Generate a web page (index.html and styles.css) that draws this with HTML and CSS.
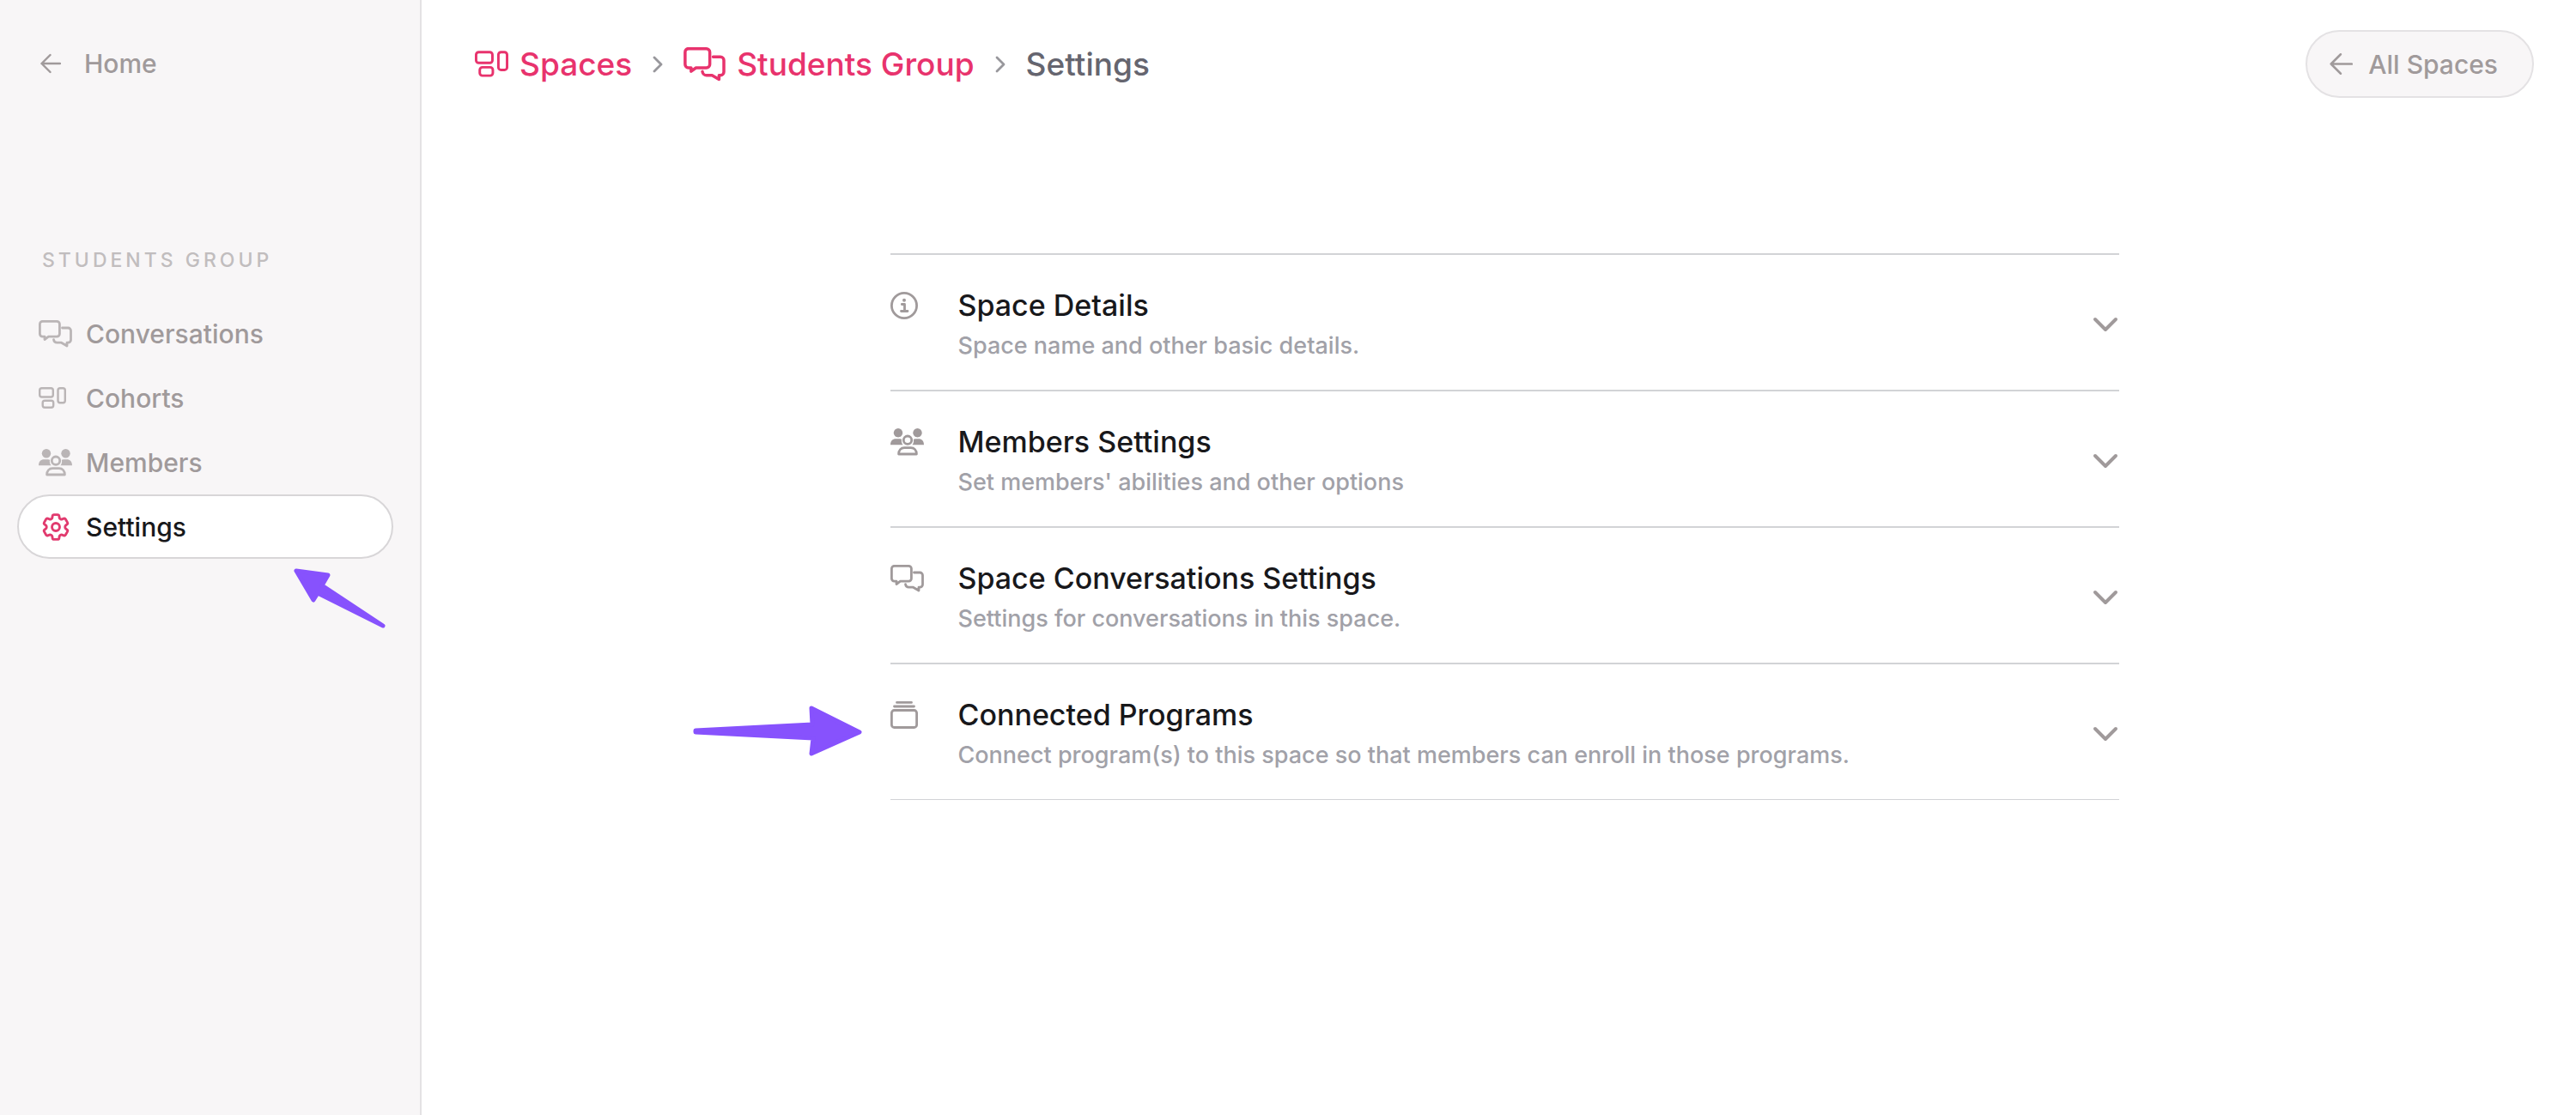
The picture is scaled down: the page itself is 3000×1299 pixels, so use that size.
FILE: index.html
```html
<!DOCTYPE html>
<html lang="en">
<head>
  <meta charset="UTF-8" />
  <meta name="viewport" content="width=device-width, initial-scale=1.0" />
  <title>Settings - Students Group</title>
  <link rel="stylesheet" href="styles.css">
</head>
<body>

  <!-- shared icons -->
  <svg class="sprite" aria-hidden="true">
    <symbol id="icon-back" viewBox="0 0 24 24">
      <path d="M23 12H1.5M11.500 2L1.500 12l10 10" />
    </symbol>
    <symbol id="icon-chat" viewBox="0 0 39 32">
      <path d="M4.500 1.400H21.200a3.200 3.200 0 0 1 3.200 3.200V16a3.200 3.200 0 0 1-3.200 3.200H11.500L7 22.500V19.200H4.500A3.200 3.200 0 0 1 1.400 16V4.500a3.200 3.200 0 0 1 3.200-3.200z" />
      <path d="M27.500 9h6.800a3.200 3.200 0 0 1 3.200 3.200V23a3.200 3.200 0 0 1-3.200 3.200H33V30l-6.500-3.800H21.500a4 4 0 0 1-4-3.500" />
    </symbol>
    <symbol id="icon-grid" viewBox="0 0 32 25">
      <rect x="1.200" y="1.200" width="15.600" height="10.300" rx="2.500" />
      <rect x="4.700" y="15.700" width="12.500" height="8" rx="2.500" />
      <rect x="22.500" y="1.200" width="8.300" height="17" rx="2.500" />
    </symbol>
    <symbol id="icon-members" viewBox="0 0 39 32">
      <g fill="currentColor" stroke="none">
        <circle cx="9" cy="5.200" r="5.200" />
        <circle cx="31.500" cy="5.200" r="5.200" />
        <path d="M0 19.300c0-4.500 2.600-7 6.200-7h4.600c1 0 1.700.2 2.300.5-.6 2.600 0 4.800 1.500 6.500z" />
        <path d="M39 19.300c0-4.500-2.600-7-6.200-7h-3.600c-1 0-1.700.2-2.300.5.6 2.600 0 4.800-1.500 6.500z" />
      </g>
      <circle cx="20" cy="13.700" r="4.700" />
      <path d="M9.600 30c0-4.500 2.800-7.400 6.600-7.400h7.600c3.800 0 6.600 2.900 6.600 7.400z" />
    </symbol>
    <symbol id="icon-gear" viewBox="2 2 20 20">
      <path d="M9.594 3.940c.09-.542.56-.94 1.110-.94h2.593c.55 0 1.020.398 1.110.94l.213 1.281c.063.374.313.686.645.87.074.04.147.083.22.127.325.196.72.257 1.075.124l1.217-.456a1.125 1.125 0 0 1 1.370.49l1.296 2.247a1.125 1.125 0 0 1-.26 1.431l-1.003.827c-.293.241-.438.613-.43.992a7.723 7.723 0 0 1 0 .255c-.008.378.137.75.43.991l1.004.827c.424.35.534.955.26 1.430l-1.298 2.247a1.125 1.125 0 0 1-1.369.491l-1.217-.456c-.355-.133-.75-.072-1.076.124a6.470 6.470 0 0 1-.22.128c-.331.183-.581.495-.644.869l-.213 1.281c-.09.543-.56.94-1.110.94h-2.594c-.55 0-1.019-.398-1.110-.94l-.213-1.281c-.062-.374-.312-.686-.644-.87a6.520 6.520 0 0 1-.22-.127c-.325-.196-.72-.257-1.076-.124l-1.217.456a1.125 1.125 0 0 1-1.369-.49l-1.297-2.247a1.125 1.125 0 0 1 .26-1.431l1.004-.827c.292-.24.437-.613.43-.991a6.932 6.932 0 0 1 0-.255c.007-.38-.138-.751-.43-.992l-1.004-.827a1.125 1.125 0 0 1-.26-1.430l1.297-2.247a1.125 1.125 0 0 1 1.370-.491l1.216.456c.356.133.751.072 1.076-.124.072-.044.146-.086.22-.128.332-.183.582-.495.644-.869l.214-1.280Z" />
      <circle cx="12" cy="12" r="2.800" />
    </symbol>
    <symbol id="icon-info" viewBox="0 0 32 32">
      <circle cx="16" cy="16" r="14.600" />
      <path d="M13.300 14.500H16.500V22M12.500 22.500h7.500" />
      <circle cx="16" cy="9.800" r="2" fill="currentColor" stroke="none" />
    </symbol>
    <symbol id="icon-stack" viewBox="0 0 32 32">
      <rect x="1.400" y="10.500" width="29.200" height="20" rx="3" />
      <path d="M4.500 6h23M7.500 1.400h17" />
    </symbol>
    <symbol id="icon-next" viewBox="0 0 12 20">
      <path d="M2 2l8 8-8 8" />
    </symbol>
    <symbol id="icon-down" viewBox="0 0 32 20">
      <path d="M4 4l12 12L28 4" />
    </symbol>
  </svg>

  <div class="layout">
    <aside class="sidebar">
      <a class="home-link" href="#">
        <svg class="icon icon-back"><use href="#icon-back" /></svg>
        Home
      </a>

      <h2 class="nav-title">Students Group</h2>
      <nav class="nav">
        <a class="nav-link" href="#">
          <span class="nav-icon"><svg class="icon icon-wide"><use href="#icon-chat" /></svg></span>
          Conversations
        </a>
        <a class="nav-link" href="#">
          <span class="nav-icon"><svg class="icon icon-grid"><use href="#icon-grid" /></svg></span>
          Cohorts
        </a>
        <a class="nav-link" href="#">
          <span class="nav-icon"><svg class="icon icon-wide"><use href="#icon-members" /></svg></span>
          Members
        </a>
        <a class="nav-link active" href="#" aria-current="page">
          <span class="nav-icon"><svg class="icon icon-gear"><use href="#icon-gear" /></svg></span>
          Settings
          <svg class="pointer pointer-nav" viewBox="0 0 108 70" aria-hidden="true">
            <path d="M3 3L40 8 33 20 104 67 28 29 23 37z" />
          </svg>
        </a>
      </nav>
    </aside>

    <main class="main">
      <header class="topbar">
        <nav class="breadcrumb" aria-label="Breadcrumb">
          <a class="crumb" href="#">
            <svg class="icon crumb-grid"><use href="#icon-grid" /></svg>
            Spaces
          </a>
          <svg class="icon crumb-next"><use href="#icon-next" /></svg>
          <a class="crumb" href="#">
            <svg class="icon crumb-chat"><use href="#icon-chat" /></svg>
            Students Group
          </a>
          <svg class="icon crumb-next"><use href="#icon-next" /></svg>
          <span class="crumb-current">Settings</span>
        </nav>
        <a class="all-spaces" href="#">
          <svg class="icon icon-back-large"><use href="#icon-back" /></svg>
          All Spaces
        </a>
      </header>

      <section class="settings">
        <button class="setting" type="button" aria-expanded="false">
          <span class="setting-icon"><svg class="icon icon-square"><use href="#icon-info" /></svg></span>
          <span class="setting-text">
            <span class="setting-title">Space Details</span>
            <span class="setting-desc">Space name and other basic details.</span>
          </span>
          <svg class="icon icon-down"><use href="#icon-down" /></svg>
        </button>
        <button class="setting" type="button" aria-expanded="false">
          <span class="setting-icon"><svg class="icon icon-wide"><use href="#icon-members" /></svg></span>
          <span class="setting-text">
            <span class="setting-title">Members Settings</span>
            <span class="setting-desc">Set members' abilities and other options</span>
          </span>
          <svg class="icon icon-down"><use href="#icon-down" /></svg>
        </button>
        <button class="setting" type="button" aria-expanded="false">
          <span class="setting-icon"><svg class="icon icon-wide"><use href="#icon-chat" /></svg></span>
          <span class="setting-text">
            <span class="setting-title">Space Conversations Settings</span>
            <span class="setting-desc">Settings for conversations in this space.</span>
          </span>
          <svg class="icon icon-down"><use href="#icon-down" /></svg>
        </button>
        <button class="setting" type="button" aria-expanded="false">
          <span class="setting-icon"><svg class="icon icon-square"><use href="#icon-stack" /></svg></span>
          <span class="setting-text">
            <span class="setting-title">Connected Programs</span>
            <span class="setting-desc">Connect program(s) to this space so that members can enroll in those programs.</span>
          </span>
          <svg class="icon icon-down"><use href="#icon-down" /></svg>
          <svg class="pointer pointer-setting" viewBox="0 0 200 62" aria-hidden="true">
            <path d="M4 30L140 23 139 4 195 32 139 57 141 39 4 32z" />
          </svg>
        </button>
      </section>
    </main>
  </div>

</body>
</html>
```

FILE: styles.css
```css
* {
  box-sizing: border-box;
}
body {
  margin: 0;
  font-family: Inter, "Liberation Sans", sans-serif;
  font-size: 30px;
  color: #18181b;
  background: #fff;
}
a {
  color: inherit;
  text-decoration: none;
}
.sprite {
  display: none;
}
.layout {
  display: flex;
  min-height: 100vh;
}

/* icons */
.icon {
  display: block;
  flex-shrink: 0;
  fill: none;
  stroke: currentColor;
  stroke-width: 2.8;
  stroke-linecap: round;
  stroke-linejoin: round;
}
.icon-back {
  width: 24px;
  height: 24px;
  stroke-width: 2.4;
}
.icon-back-large {
  width: 27px;
  height: 27px;
  stroke-width: 2.2;
}
.icon-wide {
  width: 39px;
  height: 32px;
}
.icon-grid {
  width: 32px;
  height: 25px;
  stroke-width: 2.4;
}
.icon-gear {
  width: 32px;
  height: 32px;
  margin-left: 4px;
  stroke-width: 1.8;
}
.icon-square {
  width: 32px;
  height: 32px;
}
.icon-down {
  width: 32px;
  height: 20px;
  stroke-width: 4;
}

/* sidebar */
.sidebar {
  width: 491px;
  flex-shrink: 0;
  padding: 48px 31px 48px 20px;
  background: #f8f6f7;
  border-right: 2px solid #e4e2e4;
}
.home-link {
  display: flex;
  align-items: center;
  gap: 27px;
  padding-left: 27px;
  line-height: 52px;
  font-weight: 500;
  color: #a09a9b;
}
.nav-title {
  margin: 186px 0 31px;
  padding-left: 29px;
  font-size: 23px;
  line-height: 34px;
  font-weight: 500;
  letter-spacing: 4px;
  text-transform: uppercase;
  color: #c1bdbe;
}
.nav-link {
  position: relative;
  display: flex;
  align-items: center;
  height: 75px;
  padding: 0 23px;
  border: 2px solid transparent;
  border-radius: 38px;
  font-weight: 500;
  color: #a09a9b;
}
.nav-icon {
  width: 55px;
  color: #bab5b6;
}
.nav-link.active {
  background: #fff;
  border-color: #d8d6d8;
  color: #18181b;
}
.active .nav-icon {
  color: #e13a6e;
}

/* main */
.main {
  flex: 1;
  padding: 35px 49px 48px 62px;
}
.topbar {
  display: flex;
  justify-content: space-between;
  align-items: center;
}
.breadcrumb {
  display: flex;
  align-items: center;
  gap: 24px;
  font-size: 37px;
  font-weight: 500;
}
.crumb {
  display: flex;
  align-items: center;
  gap: 13px;
  color: #e8336d;
}
.crumb-grid {
  width: 39px;
  height: 31px;
  stroke-width: 2.4;
}
.crumb-chat {
  width: 49px;
  height: 40px;
}
.crumb-next {
  width: 12px;
  height: 20px;
  color: #98979c;
}
.crumb-current {
  color: #65656f;
}
.all-spaces {
  display: flex;
  align-items: center;
  gap: 18px;
  height: 79px;
  padding: 0 40px 0 26px;
  border: 2px solid #e4e2e4;
  border-radius: 40px;
  background: #f8f6f7;
  font-weight: 500;
  color: #a09a9b;
}

/* accordion */
.settings {
  max-width: 1431px;
  margin: 181px auto 0;
  border-bottom: 1px solid #d2d3d6;
}
.setting {
  position: relative;
  display: flex;
  align-items: center;
  width: 100%;
  height: 159px;
  padding: 4px 0 0;
  border: 0;
  border-top: 2px solid #d2d3d6;
  background: none;
  font-family: inherit;
  font-weight: 500;
  text-align: left;
  color: #a09a9b;
  cursor: pointer;
}
.setting-icon {
  align-self: flex-start;
  width: 79px;
  padding-top: 39px;
}
.setting-text {
  flex: 1;
}
.setting-title,
.setting-desc {
  display: block;
}
.setting-title {
  font-size: 34px;
  line-height: 50px;
  color: #18181b;
}
.setting-desc {
  font-size: 27px;
  line-height: 44px;
  color: #a1a1a8;
}

/* purple pointers drawn over the page */
.pointer {
  position: absolute;
  fill: #8752fd;
  stroke: #8752fd;
  stroke-width: 5;
  stroke-linejoin: round;
}
.pointer-nav {
  left: 320px;
  top: 84px;
  width: 108px;
  height: 70px;
}
.pointer-setting {
  left: -231px;
  top: 47px;
  width: 200px;
  height: 62px;
}
```
